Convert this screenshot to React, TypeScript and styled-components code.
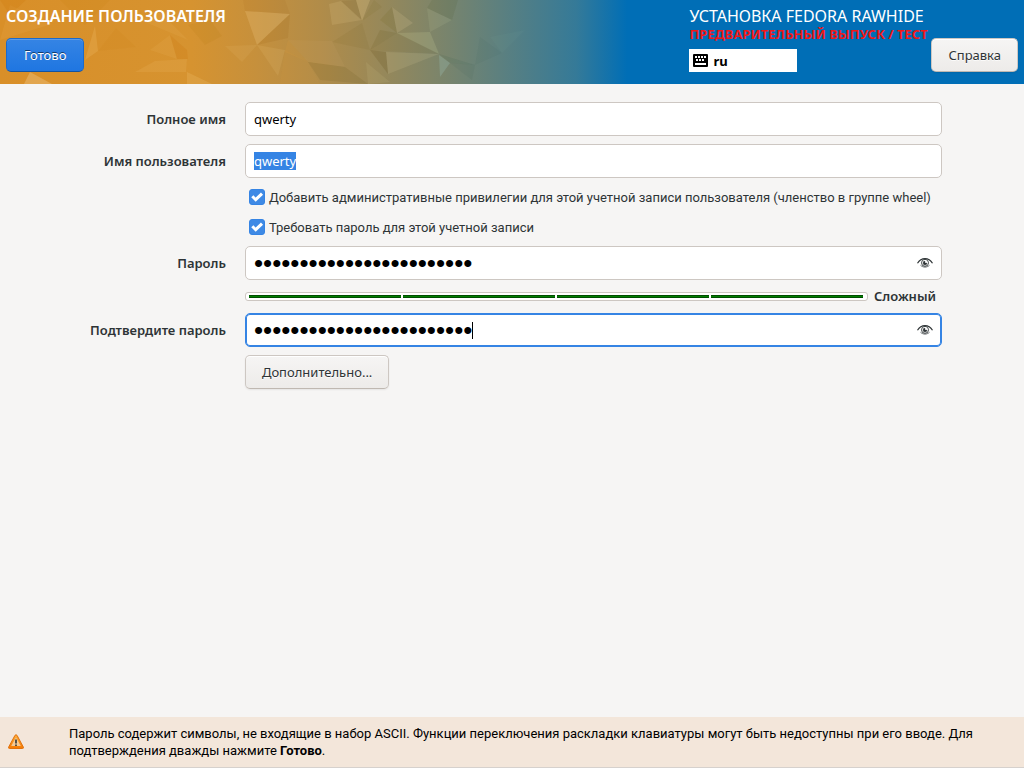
import React, { useEffect, useRef, useState } from 'react';
import styled, { createGlobalStyle, css } from 'styled-components';

const GlobalStyle = createGlobalStyle`
  *, *::before, *::after { box-sizing: border-box; }
  body {
    margin: 0;
    background: #f6f5f4;
    color: #2e3436;
    font-family: "Noto Sans", "Open Sans", sans-serif;
    font-size: 13px;
    line-height: 17px;
  }
  button, input { font: inherit; color: inherit; }
`;

const Page = styled.div`
  min-height: 100vh;
  display: flex;
  flex-direction: column;
`;

const Header = styled.header`
  position: relative;
  display: flex;
  justify-content: space-between;
  min-height: 84px;
  padding: 6px;
  background: #006eb6;
  overflow: hidden;
`;

const HeaderArt = styled.svg`
  position: absolute;
  top: 0;
  left: 0;
  width: 640px;
  height: 84px;
`;

const HeaderGroup = styled.div`
  position: relative;
  display: flex;
  flex-direction: column;
  align-items: flex-start;
  gap: 12px;
`;

const ProductGroup = styled.div`
  position: relative;
  display: flex;
  align-items: flex-start;
`;

const Title = styled.h1`
  margin: 0;
  color: #fff;
  font-size: 16px;
  line-height: 20px;
  font-weight: 600;
`;

const Product = styled.div`
  display: flex;
  flex-direction: column;
  align-items: flex-start;
  min-width: 242px;
  color: #fff;
  font-size: 16px;
  line-height: 20px;
`;

const Prerelease = styled.strong`
  color: #f01818;
  font-size: 13px;
  line-height: 17px;
  white-space: nowrap;
`;

const Layout = styled.div`
  display: flex;
  align-items: center;
  gap: 5px;
  width: 108px;
  height: 23px;
  margin-top: 6px;
  padding: 0 4px;
  background: #fff;
  color: #000;
  font-size: 13px;
  font-weight: 700;
`;

const Button = styled.button<{ $primary?: boolean }>`
  height: 34px;
  padding: 0 16px;
  border: 1px solid #cdc7c2;
  border-bottom-color: #bfb8b1;
  border-radius: 5px;
  background: linear-gradient(#f6f5f4, #edebe9);
  box-shadow: inset 0 1px #fff, 0 1px 2px rgba(0, 0, 0, 0.07);
  text-shadow: 0 1px rgba(255, 255, 255, 0.77);
  white-space: nowrap;
  ${({ $primary }) =>
    $primary &&
    css`
      padding: 0 17px;
      color: #fff;
      border-color: #1b6acb;
      border-bottom-color: #15539e;
      background: linear-gradient(#3584e4, #1f76e1);
      box-shadow: inset 0 1px rgba(255, 255, 255, 0.2);
      text-shadow: 0 -1px rgba(0, 0, 0, 0.55);
    `}
`;

const HelpSlot = styled.div`
  padding-top: 32px;
`;

const Form = styled.form`
  flex: 1;
  align-self: center;
  width: 84%;
  padding: 18px 0;
  display: grid;
  grid-template-columns: 144px 1fr;
  column-gap: 19px;
  row-gap: 8px;
  align-content: start;
  align-items: center;
`;

const Label = styled.label`
  text-align: right;
  font-weight: 600;
  white-space: nowrap;
  justify-self: end;
`;

const FieldCell = styled.div`
  grid-column: 2;
  position: relative;
  display: flex;
  align-items: center;
`;

const Input = styled.input<{ $active?: boolean }>`
  width: 100%;
  height: 34px;
  padding: 0 8px;
  border: 1px solid #cdc7c2;
  border-radius: 5px;
  background: #fff;
  color: #000;
  outline: none;
  &::selection { background: #3584e4; color: #fff; }
  &[type='password'] {
    padding-right: 34px;
    font-family: "Liberation Sans", sans-serif;
    font-size: 26px;
  }
  ${({ $active }) =>
    $active &&
    css`
      border-color: #3584e4;
      box-shadow: inset 0 0 0 1px #3584e4;
    `}
`;

const Caret = styled.span`
  position: absolute;
  left: 227px;
  width: 1px;
  height: 17px;
  background: #000;
`;

const Reveal = styled.button`
  position: absolute;
  right: 9px;
  display: flex;
  padding: 0;
  border: 0;
  background: none;
`;

const CheckRow = styled.label`
  grid-column: 2;
  display: flex;
  align-items: center;
  gap: 4px;
  min-height: 22px;
  padding-left: 4px;
  font-family: Roboto, "Noto Sans", sans-serif;
`;

const Check = styled.input`
  appearance: none;
  flex: none;
  width: 16px;
  height: 16px;
  margin: 0;
  border: 1px solid #cdc7c2;
  border-radius: 3px;
  background: #fff;
  &:checked {
    border-color: #3584e4;
    background: #3f8ae5 url("data:image/svg+xml,%3Csvg xmlns='http://www.w3.org/2000/svg' viewBox='0 0 14 14'%3E%3Cpath d='M2.300 6.300 5.700 9.700 12 3.600' fill='none' stroke='white' stroke-width='3'/%3E%3C/svg%3E") center / 14px 14px;
  }
`;

const StrengthRow = styled.div`
  grid-column: 2;
  display: flex;
  align-items: center;
  gap: 6px;
  padding-right: 6px;
  font-weight: 600;
`;

const StrengthBar = styled.div`
  flex: 1;
  display: flex;
  gap: 2px;
  height: 9px;
  padding: 2px 4px 2px 3px;
  border: 1px solid #cdc7c2;
  border-radius: 3px;
  background: #fff;
`;

const Segment = styled.span`
  flex: 1;
  background: #008000;
  border: solid #004d00;
  border-width: 1px 0;
`;

const Warning = styled.footer`
  display: flex;
  align-items: center;
  gap: 45px;
  min-height: 51px;
  padding: 8px;
  background: #f3e6da;
  border-bottom: 1px solid #d6d1cd;
  color: #000;
  font-family: Roboto, "Noto Sans", sans-serif;
`;

const WarningText = styled.p`
  margin: 0;
  flex: 1;
  max-width: 920px;
`;

const facets: [string, string, number][] = [
  ['245,11 290,14 257,45', '#ffe0a0', 0.18],
  ['290,14 288,38 257,45', '#8a4a00', 0.1],
  ['243,0 285,0 290,14 245,11', '#8a4a00', 0.06],
  ['329,4 341,1 362,20 332,25', '#ffe0a0', 0.13],
  ['341,1 356,0 362,21', '#6b4a10', 0.1],
  ['356,0 370,0 362,21', '#ffe0a0', 0.2],
  ['374,0 382,7 362,21', '#6b5a10', 0.08],
  ['392,7 413,23 397,33', '#ffe8b0', 0.13],
  ['392,7 380,20 397,33', '#6b5a10', 0.13],
  ['432,0 458,0 452,20 427,8', '#3a5020', 0.1],
  ['427,8 452,20 430,32', '#d8e0b0', 0.1],
  ['332,42 362,23 370,50', '#6b4a10', 0.08],
  ['397,33 430,32 439,54', '#d0d8a0', 0.18],
  ['380,30 397,33 370,50', '#5c4a10', 0.13],
  ['397,33 439,54 370,50', '#6b5010', 0.07],
  ['386,52 439,54 388,74', '#e0d8a0', 0.14],
  ['370,50 386,52 388,74', '#5c4a10', 0.18],
  ['439,55 450,63 440,77', '#a8d8d0', 0.22],
  ['439,54 475,65 450,63', '#305848', 0.12],
  ['450,63 475,65 472,80', '#305848', 0.08],
  ['308,62 345,67 368,84 320,80', '#5c4a10', 0.12],
  ['366,62 390,82 368,84', '#e0d8a0', 0.1],
  ['480,37 502,53 475,65', '#305848', 0.05],
  ['490,37 525,30 502,53', '#90b8b0', 0.06],
  ['288,40 332,41 345,67 308,62', '#ffe0a0', 0.05],
  ['288,40 308,62 285,52', '#ffb840', 0.08],
  ['257,45 285,50 278,76', '#ffe0a0', 0.1],
  ['285,50 308,62 320,84 280,84', '#ffb840', 0.05],
  ['225,46 257,45 242,62', '#ffe0a0', 0.08],
  ['187,72 212,84 187,84', '#ffd890', 0.16],
  ['155,61 187,59 186,72 135,72', '#ffd890', 0.1],
  ['170,35 187,50 188,59 177,59', '#c86800', 0.16],
  ['150,50 170,35 177,59', '#ffd890', 0.08],
  ['140,20 160,12 188,40', '#ffd890', 0.08],
  ['95,26 98,51 85,60', '#ffd890', 0.16],
  ['116,28 136,47 98,51', '#c07000', 0.08],
  ['10,5 52,24 0,40', '#ffd890', 0.08],
  ['0,0 26,0 10,15', '#c87000', 0.18],
  ['60,0 110,0 85,25', '#c87808', 0.12],
  ['30,72 52,84 24,84', '#ffe8c0', 0.25],
  ['188,25 210,20 222,36 205,45', '#a86800', 0.1],
];

function EyeIcon() {
  return (
    <svg width="16" height="16" viewBox="0 0 16 16" fill="none" stroke="#2e3436" aria-hidden="true">
      <path d="M.5 8.300C2.500 5 5 3.700 8 3.700s5.500 1.300 7.500 4.600" strokeWidth="1.200" />
      <path d="M3.500 10.300c2.600 2.400 6.400 2.400 9 0" strokeWidth=".7" />
      <circle cx="8" cy="7.800" r="3.500" strokeWidth=".9" />
      <path d="M8 6v2h2a2 2 0 1 1-2-2" fill="#2e3436" strokeWidth=".3" />
    </svg>
  );
}

function KeyboardIcon() {
  return (
    <svg width="15" height="13" viewBox="0 0 15 13" aria-hidden="true">
      <rect width="15" height="13" rx="1" fill="#000" />
      <path
        d="M2 2h2v2H2zM5 2h2v2H5zM8 2h2v2H8zM11 2h2v2h-2zM3 5h2v2H3zM6 5h2v2H6zM9 5h2v2H9zM2 9h11v2H2z"
        fill="#fff"
      />
    </svg>
  );
}

function WarningIcon() {
  return (
    <svg width="16" height="16" viewBox="0 0 16 16" aria-hidden="true">
      <defs>
        <linearGradient id="warn" x1="0" y1="0" x2="0" y2="1">
          <stop offset="0" stopColor="#fcaf3e" />
          <stop offset="1" stopColor="#f57900" />
        </linearGradient>
      </defs>
      <path
        d="M7 1.300Q8 .2 9 1.300L15.300 13Q15.800 14.500 14.500 14.500H1.500Q.2 14.500.7 13Z"
        fill="url(#warn)"
        stroke="#e0700c"
        strokeLinejoin="round"
      />
      <path d="M8 3.500 12.800 12H3.200Z" fill="#f3dfc0" opacity=".75" />
      <path d="M7.200 5.500h1.600v4H7.200zM7.200 10.500h1.600V12H7.200z" fill="#2e3436" />
    </svg>
  );
}

function PasswordField({ id, active }: { id: string; active?: boolean }) {
  const [value, setValue] = useState('x'.repeat(24));
  const [shown, setShown] = useState(false);
  return (
    <FieldCell>
      <Input
        id={id}
        type={shown ? 'text' : 'password'}
        value={value}
        $active={active}
        onChange={(e) => setValue(e.target.value)}
      />
      {active && <Caret />}
      <Reveal type="button" aria-label="Показать пароль" onClick={() => setShown(!shown)}>
        <EyeIcon />
      </Reveal>
    </FieldCell>
  );
}

export default function App() {
  const username = useRef<HTMLInputElement>(null);
  useEffect(() => {
    username.current?.focus();
    username.current?.select();
  }, []);

  return (
    <Page>
      <GlobalStyle />
      <Header>
        <HeaderArt viewBox="0 0 640 84" aria-hidden="true">
          <defs>
            <linearGradient id="sky" x1="0" x2="1" y1="0" y2="0">
              <stop offset="0" stopColor="#d98f28" />
              <stop offset=".3" stopColor="#d69330" />
              <stop offset=".4" stopColor="#c6903c" />
              <stop offset=".5" stopColor="#b18c49" />
              <stop offset=".6" stopColor="#96885a" />
              <stop offset=".7" stopColor="#78846d" />
              <stop offset=".8" stopColor="#567f83" />
              <stop offset=".9" stopColor="#357a98" />
              <stop offset=".98" stopColor="#006eb6" />
            </linearGradient>
          </defs>
          <rect width="640" height="84" fill="url(#sky)" />
          {facets.map(([points, fill, opacity]) => (
            <polygon key={points} points={points} fill={fill} opacity={opacity} />
          ))}
        </HeaderArt>
        <HeaderGroup>
          <Title>СОЗДАНИЕ ПОЛЬЗОВАТЕЛЯ</Title>
          <Button type="button" $primary>Готово</Button>
        </HeaderGroup>
        <ProductGroup>
          <Product>
            <span>УСТАНОВКА FEDORA RAWHIDE</span>
            <Prerelease>ПРЕДВАРИТЕЛЬНЫЙ ВЫПУСК / ТЕСТ</Prerelease>
            <Layout>
              <KeyboardIcon />
              ru
            </Layout>
          </Product>
          <HelpSlot>
            <Button type="button">Справка</Button>
          </HelpSlot>
        </ProductGroup>
      </Header>

      <Form>
        <Label htmlFor="fullname">Полное имя</Label>
        <FieldCell>
          <Input id="fullname" type="text" defaultValue="qwerty" />
        </FieldCell>
        <Label htmlFor="username">Имя пользователя</Label>
        <FieldCell>
          <Input id="username" type="text" defaultValue="qwerty" ref={username} />
        </FieldCell>
        <CheckRow>
          <Check type="checkbox" defaultChecked />
          Добавить административные привилегии для этой учетной записи пользователя (членство в группе wheel)
        </CheckRow>
        <CheckRow>
          <Check type="checkbox" defaultChecked />
          Требовать пароль для этой учетной записи
        </CheckRow>
        <Label htmlFor="password">Пароль</Label>
        <PasswordField id="password" />
        <StrengthRow>
          <StrengthBar role="meter" aria-label="Надёжность пароля" aria-valuemin={0} aria-valuemax={4} aria-valuenow={4}>
            <Segment />
            <Segment />
            <Segment />
            <Segment />
          </StrengthBar>
          Сложный
        </StrengthRow>
        <Label htmlFor="confirm">Подтвердите пароль</Label>
        <PasswordField id="confirm" active />
        <FieldCell>
          <Button type="button">Дополнительно...</Button>
        </FieldCell>
      </Form>

      <Warning>
        <WarningIcon />
        <WarningText>
          Пароль содержит символы, не входящие в набор ASCII. Функции переключения раскладки клавиатуры могут быть
          недоступны при его вводе. Для подтверждения дважды нажмите <b>Готово</b>.
        </WarningText>
      </Warning>
    </Page>
  );
}
